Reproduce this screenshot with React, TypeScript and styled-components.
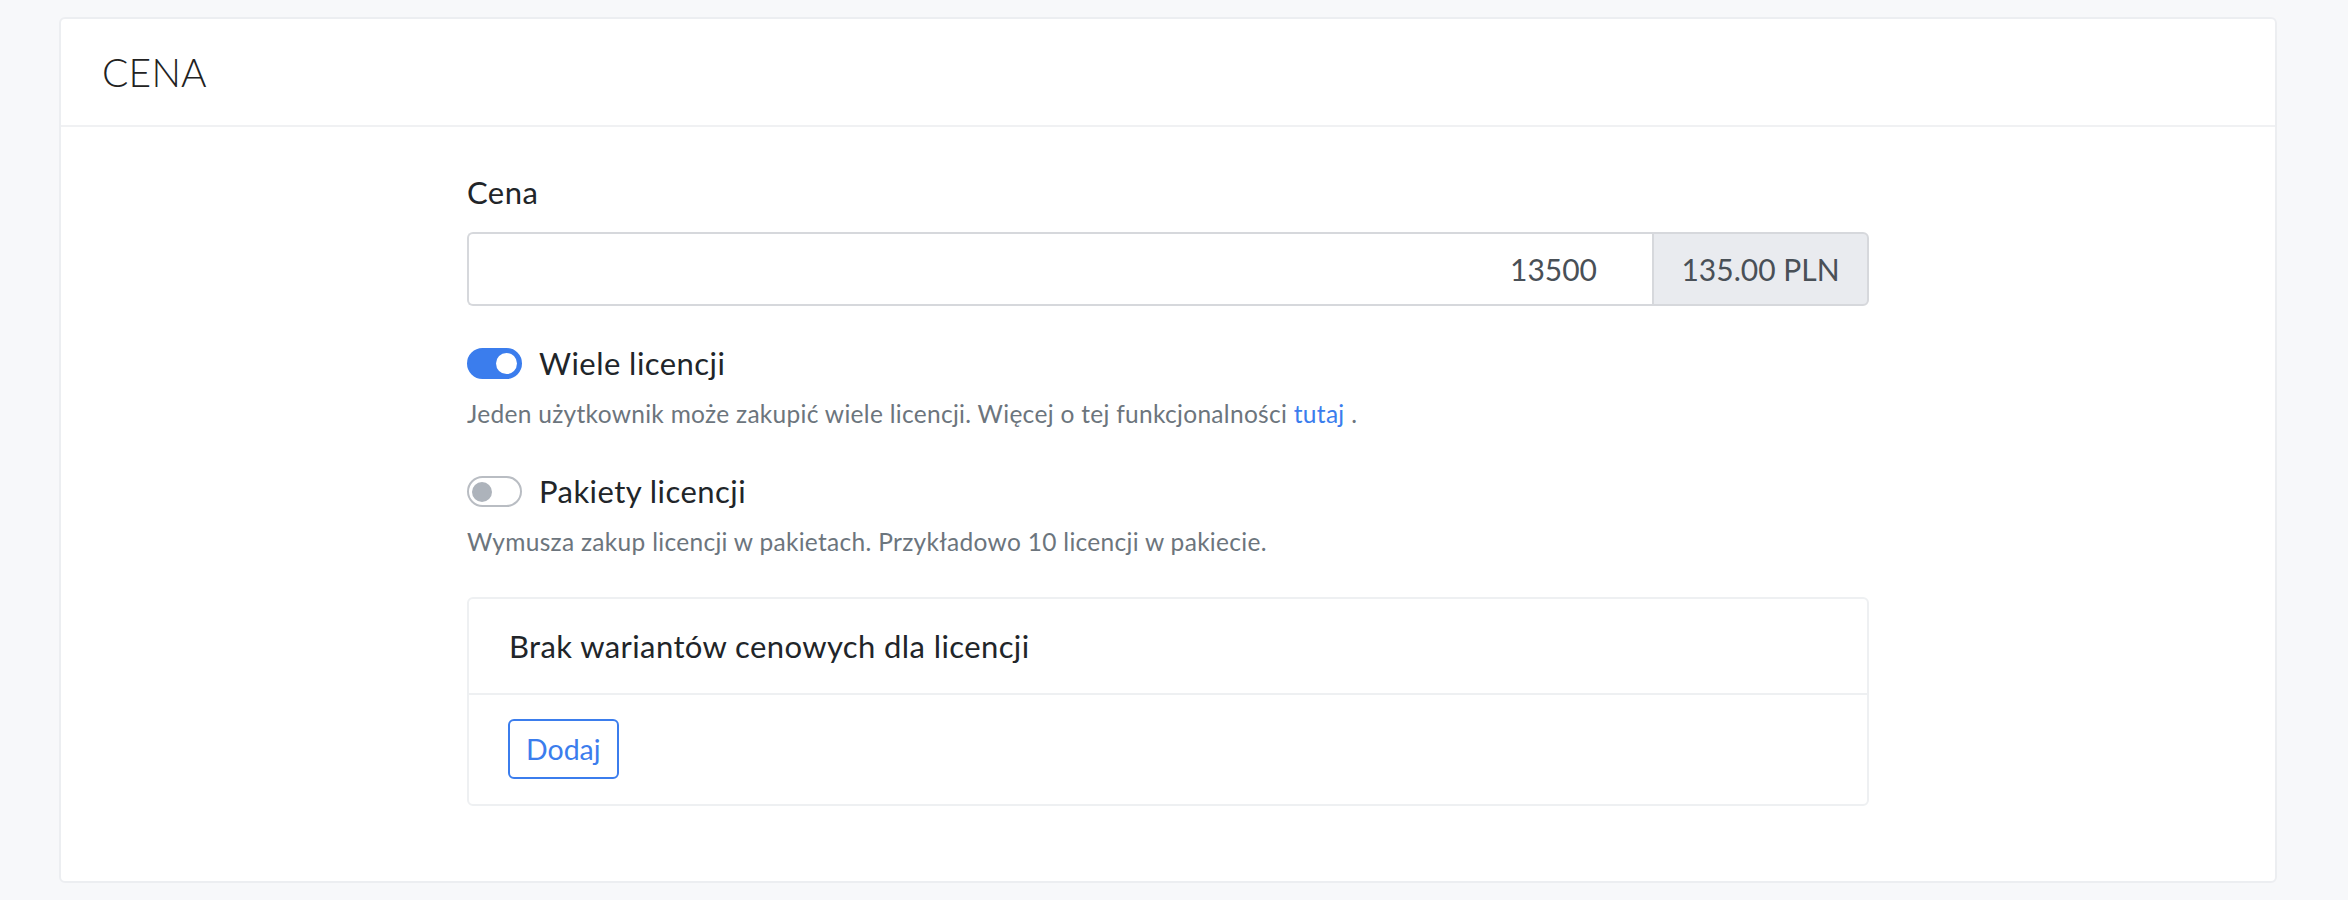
import React from 'react';
import styled, { createGlobalStyle } from 'styled-components';

const GlobalStyle = createGlobalStyle`
  html, body { margin: 0; padding: 0; background: #f7f8fa; }
  body { font-family: Lato, "Noto Sans", sans-serif; color: #212529; }
  *, *::before, *::after { box-sizing: border-box; }
`;

const Page = styled.div`
  padding: 17px 71px 20px 59px;
`;

const Card = styled.section`
  background: #fff;
  border: 2px solid #eceef1;
  border-radius: 6px;
`;

const CardHeader = styled.header`
  height: 108px;
  display: flex;
  align-items: center;
  padding-left: 41px;
  border-bottom: 2px solid #f0f1f3;
`;

const Title = styled.h2`
  margin: 0;
  font-family: Lato, sans-serif;
  font-weight: 300;
  font-size: 39px;
  line-height: 1.2;
  color: #222;
  letter-spacing: 0.2px;
`;

const CardBody = styled.div`
  padding: 43px 0 75px;
`;

const Column = styled.div`
  width: 1402px;
  margin: 0 auto;
  display: flex;
  flex-direction: column;
`;

const Label = styled.label`
  display: block;
  height: 45px;
  font-size: 31px;
  line-height: 45px;
  letter-spacing: 0.45px;
  color: #212529;
`;

const InputGroup = styled.div`
  margin-top: 17px;
  display: flex;
  height: 74px;
`;

const PriceInput = styled.input`
  flex: 1;
  min-width: 0;
  height: 100%;
  border: 2px solid #d6d8dc;
  border-right: none;
  border-radius: 6px 0 0 6px;
  padding: 0 55px 0 20px;
  text-align: right;
  font-family: Lato, sans-serif;
  font-size: 30px;
  color: #495057;
  background: #fff;
  outline: none;
`;

const Addon = styled.div`
  width: 217px;
  height: 100%;
  display: flex;
  align-items: center;
  justify-content: center;
  background: #e9ebef;
  border: 2px solid #d6d8dc;
  border-radius: 0 6px 6px 0;
  font-size: 30px;
  color: #495057;
`;

const SwitchRow = styled.div<{ $top: number }>`
  margin-top: ${(p) => p.$top}px;
  height: 45px;
  display: flex;
  align-items: center;
  gap: 17px;
`;

const Track = styled.span<{ $on: boolean }>`
  position: relative;
  width: 55px;
  height: 31px;
  border-radius: 16px;
  flex: none;
  background: ${(p) => (p.$on ? '#3b7ded' : '#fff')};
  border: 2px solid ${(p) => (p.$on ? '#3b7ded' : '#b9bdc3')};
`;

const Knob = styled.span<{ $on: boolean }>`
  position: absolute;
  top: 50%;
  width: ${(p) => (p.$on ? 21 : 20)}px;
  height: ${(p) => (p.$on ? 21 : 20)}px;
  margin-top: ${(p) => (p.$on ? -10.5 : -10)}px;
  border-radius: 50%;
  background: ${(p) => (p.$on ? '#fff' : '#adb3bb')};
  ${(p) => (p.$on ? 'right: 3px;' : 'left: 3px;')}
`;

const SwitchLabel = styled.span`
  font-size: 31px;
  line-height: 45px;
  letter-spacing: 0.45px;
  color: #212529;
`;

const Help = styled.p`
  margin: 11px 0 0;
  font-size: 24.5px;
  line-height: 34px;
  letter-spacing: 0.3px;
  color: #6c757d;
`;

const Link = styled.a`
  color: #3b7ded;
  text-decoration: none;
`;

const Panel = styled.div`
  margin-top: 38px;
  border: 2px solid #eef0f2;
  border-radius: 6px;
`;

const PanelHeader = styled.div`
  height: 96px;
  display: flex;
  align-items: center;
  padding-left: 40px;
  border-bottom: 2px solid #eef0f2;
  font-size: 31px;
  letter-spacing: 0.4px;
  color: #212529;
`;

const PanelBody = styled.div`
  padding: 24px 40px 25px 39px;
`;

const OutlineButton = styled.button`
  height: 60px;
  padding: 0 16px;
  border: 2px solid #3b7ded;
  border-radius: 6px;
  background: #fff;
  color: #3b7ded;
  font-family: Lato, sans-serif;
  font-size: 28.5px;
  cursor: pointer;
`;

function Switch({ on }: { on: boolean }) {
  return (
    <Track $on={on}>
      <Knob $on={on} />
    </Track>
  );
}

export default function App() {
  return (
    <>
      <GlobalStyle />
      <Page>
        <Card>
          <CardHeader>
            <Title>CENA</Title>
          </CardHeader>
          <CardBody>
            <Column>
              <Label>Cena</Label>
              <InputGroup>
                <PriceInput type="text" defaultValue="13500" />
                <Addon>135.00 PLN</Addon>
              </InputGroup>

              <SwitchRow $top={35}>
                <Switch on />
                <SwitchLabel>Wiele licencji</SwitchLabel>
              </SwitchRow>
              <Help>
                Jeden użytkownik może zakupić wiele licencji. Więcej o tej funkcjonalności{' '}
                <Link href="#">tutaj</Link> .
              </Help>

              <SwitchRow $top={38}>
                <Switch on={false} />
                <SwitchLabel>Pakiety licencji</SwitchLabel>
              </SwitchRow>
              <Help>Wymusza zakup licencji w pakietach. Przykładowo 10 licencji w pakiecie.</Help>

              <Panel>
                <PanelHeader>Brak wariantów cenowych dla licencji</PanelHeader>
                <PanelBody>
                  <OutlineButton type="button">Dodaj</OutlineButton>
                </PanelBody>
              </Panel>
            </Column>
          </CardBody>
        </Card>
      </Page>
    </>
  );
}
